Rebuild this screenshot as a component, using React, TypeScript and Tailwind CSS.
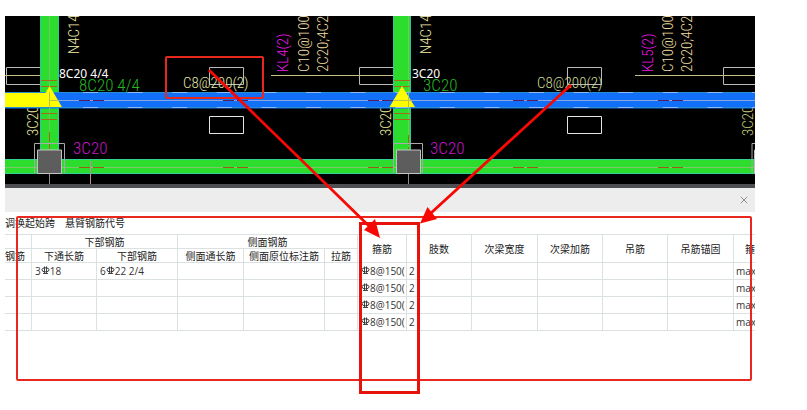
import { X } from "lucide-react";

const stirrupRows = [
  { bottomThrough: "18", bottom: "22 2/4" },
  { bottomThrough: "", bottom: "" },
  { bottomThrough: "", bottom: "" },
  { bottomThrough: "", bottom: "" },
];

const tailHeaders = ["箍筋", "肢数", "次梁宽度", "次梁加筋", "吊筋", "吊筋锚固"];
const colWidths = [27, 65, 81, 66, 81, 33, 49, 65, 66, 65, 65, 66, 21];

const cell = "overflow-hidden whitespace-nowrap border-b border-r border-[#dbe0e0] p-0 font-normal";

// HRB400 rebar grade sign
function RebarSign() {
  return (
    <svg className="-mt-1 inline-block" width="9" height="9" viewBox="0 0 9 9" fill="none" stroke="#333">
      <ellipse cx="4.500" cy="3.800" rx="3.600" ry="2" />
      <path d="M3.500 0.500v7M5.500 0.500v7M2 7.500h5" strokeWidth="0.900" />
    </svg>
  );
}

type CadTextProps = { x: number; y: number; color: string; size?: number; vertical?: boolean; children: string };

function CadText({ x, y, color, size = 15, vertical, children }: CadTextProps) {
  return (
    <text
      x={x}
      y={y}
      fill={color}
      fontSize={size}
      className="font-light [font-family:'Roboto_Condensed','Noto_Sans',sans-serif]"
      transform={vertical ? `rotate(-90 ${x} ${y})` : undefined}
    >
      {children}
    </text>
  );
}

function BeamPlan() {
  const redSegments = [79, 223, 368, 513, 658];
  return (
    <svg className="block h-[172px] w-full bg-black" viewBox="5 16 750 172" preserveAspectRatio="xMinYMin slice">
      {/* secondary beam outlines */}
      <g fill="none" stroke="#b9b9b9">
        <path d="M6.500 67.500h34v17h-34zM209.500 67.500h34v17h-34zM359.500 67.500h34v17h-34zM567.500 67.500h34v17h-34zM723.500 67.500h34v17h-34z" />
        <path d="M209.500 116.500h34v17h-34zM567.500 116.500h34v17h-34z" stroke="#e4e4e4" />
      </g>
      <path d="M5 75.500H46M271 75.500H399M635 75.500H755" stroke="#c8bd83" />

      <CadText x={38} y={136} color="#eeee9c" vertical>3C20</CadText>
      <CadText x={391} y={136} color="#eeee9c" vertical>3C20</CadText>
      <CadText x={753} y={136} color="#cccc7c" vertical>3C20</CadText>

      {/* vertical main beams */}
      <path d="M40 16h19v147H40zM393 16h18v147h-18z" fill="#2ddd2d" />
      <path d="M40.500 16V159M58.500 16V159M393.500 16V159M410.500 16V159" stroke="#28c9a0" />

      {/* bottom beam */}
      <path d="M5 159h750v15H5z" fill="#2ddd2d" />
      <path d="M5 159.500H755M5 173.500H755" stroke="#32d292" />
      <path d="M5 167.500H755" stroke="#7fc76a" />

      {/* selected beam */}
      <path d="M5 92h750v16.500H5z" fill="#1270f8" />
      <path d="M5 92.500H755M5 107.500H755" stroke="#278ed4" />
      <path d="M83 92.500H755M83 107.500H755" stroke="#8fb8ee" strokeDasharray="15 29.600" />
      <path d="M49 100.500H755" stroke="#8aa6e0" />

      {redSegments.map((x) => (
        <g key={x}>
          <path d={`M${x} 100.500h11m3 0h11`} stroke="#5a1a5c" />
          <path d={`M${x} 167.500h11m3 0h11`} stroke="#a05a1c" />
        </g>
      ))}

      {/* axes and stirrup ticks */}
      <path d="M49.500 16V150M408.500 16V150" stroke="#6fc868" />
      <path d="M49.500 132v17M408.500 135v14" stroke="#a8621c" strokeDasharray="10 2" />
      <path
        d="M41 80.500H57M41 86.500H57M41 113.500H57M41 119.500H57M394 80.500H410M394 86.500H410M394 113.500H410M394 119.500H410"
        stroke="#a8681c"
      />

      <path d="M5 93H45.500L49.500 86L62 107H5z" fill="#ffff00" />
      <path d="M402 86L415 107H389.500z" fill="#ffff00" />
      <path d="M49.500 92V107M50 100.500H58M408.500 97V107M393 100.500H411" stroke="#c2bf45" />

      {/* columns */}
      <path d="M34.500 173V143.500H64.500V173M393.500 173V143.500H422.500V173M752 173V143.500H757" fill="none" stroke="#a9a9a9" />
      <path d="M37.500 150h24v23.500h-24zM396.500 150h24v23.500h-24zM754.500 150h24v23.500h-24z" fill="#5d5d5d" stroke="#c4c4c4" />
      <path d="M49.500 174V184M408.500 174V184" stroke="#8d8d8d" />
      <path d="M90.500 161V184" stroke="#c08aa4" />

      <CadText x={79} y={91} size={17} color="#22b822">8C20 4/4</CadText>
      <CadText x={423} y={91} size={17} color="#22b822">3C20</CadText>
      <CadText x={183} y={88} color="#e4eaa8">C8@200(2)</CadText>
      <CadText x={537} y={88} color="#d0dc98">C8@200(2)</CadText>
      <CadText x={73} y={154} size={17} color="#c814c8">3C20</CadText>
      <CadText x={430} y={154} size={17} color="#c814c8">3C20</CadText>

      <CadText x={79} y={54} color="#f2eca8" vertical>N4C14</CadText>
      <CadText x={431} y={54} color="#f2eca8" vertical>N4C14</CadText>
      <CadText x={288} y={72} color="#ee18ee" vertical>KL4(2)</CadText>
      <CadText x={309} y={72} color="#f0dfa0" vertical>C10@100(2</CadText>
      <CadText x={328} y={72} color="#f0dfa0" vertical>2C20;4C2</CadText>
      <CadText x={653} y={72} color="#ee18ee" vertical>KL5(2)</CadText>
      <CadText x={673} y={72} color="#f0dfa0" vertical>C10@100(2</CadText>
      <CadText x={692} y={72} color="#f0dfa0" vertical>2C20;4C2</CadText>

      <g fill="#fff" fontSize="12" className="[font-family:'Noto_Sans',sans-serif]">
        <text x="59" y="78">8C20 4/4</text>
        <text x="412" y="78">3C20</text>
      </g>

      <path d="M5 184h750v4H5z" fill="#4e4f53" />
    </svg>
  );
}

function RebarTable() {
  return (
    <table className="w-full table-fixed border-separate border-spacing-0 border-t border-[#dbe0e0] text-center text-[10px] leading-[13px]">
      <colgroup>
        {colWidths.map((w, i) => (
          <col key={i} style={{ width: `${(w / 750) * 100}%` }} />
        ))}
      </colgroup>
      <thead>
        <tr className="h-[14px]">
          <th className={cell}></th>
          <th className={cell} colSpan={2}>下部钢筋</th>
          <th className={cell} colSpan={3}>侧面钢筋</th>
          {tailHeaders.map((name) => (
            <th key={name} className={cell} rowSpan={2}>{name}</th>
          ))}
          <th className={`${cell} border-r-0`} rowSpan={2}>
            <span className="block pl-[11px] text-left">箍筋</span>
          </th>
        </tr>
        <tr className="h-[14px]">
          <th className={`${cell} text-left`}>钢筋</th>
          <th className={cell}>下通长筋</th>
          <th className={cell}>下部钢筋</th>
          <th className={cell}>侧面通长筋</th>
          <th className={cell}>侧面原位标注筋</th>
          <th className={cell}>拉筋</th>
        </tr>
      </thead>
      <tbody className="text-left text-[10px] leading-4 text-[#333] [font-family:'Open_Sans','Noto_Sans_CJK_SC',sans-serif]">
        {stirrupRows.map((row, i) => (
          <tr key={i} className="h-[17px]">
            <td className={cell}></td>
            <td className={cell}>
              {row.bottomThrough && <span className="pl-[3px]">3<RebarSign />{row.bottomThrough}</span>}
            </td>
            <td className={cell}>
              {row.bottom && <span className="pl-[3px]">6<RebarSign />{row.bottom}</span>}
            </td>
            <td className={cell}></td>
            <td className={cell}></td>
            <td className={cell}></td>
            <td className={cell}>
              <span className="pl-[3px]"><RebarSign />8@150(</span>
            </td>
            <td className={cell}><span className="pl-[2px]">2</span></td>
            <td className={cell}></td>
            <td className={cell}></td>
            <td className={cell}></td>
            <td className={cell}></td>
            <td className={`${cell} border-r-0`}><span className="pl-[2px]">max</span></td>
          </tr>
        ))}
      </tbody>
    </table>
  );
}

// Red callouts drawn over the plan and the table
function Callouts() {
  return (
    <svg className="pointer-events-none absolute left-0 top-0" width="807" height="410" viewBox="0 0 807 410" fill="none">
      <rect x="166" y="57" width="97" height="41" rx="1" stroke="#e8281e" strokeWidth="2" />
      <rect x="17" y="217" width="734" height="163" rx="1" stroke="#e8281e" strokeWidth="2" />
      <rect x="360.500" y="223.500" width="58" height="169" stroke="#e6120c" strokeWidth="3" />
      <path d="M209 70L369 226M571 85L431 213" stroke="#f80804" strokeWidth="2.800" />
      <path d="M380 238L364 230L375 219zM420 223.500L427.500 207L437 219z" fill="#f80804" />
    </svg>
  );
}

export default function App() {
  return (
    <main className="relative min-h-[410px] overflow-hidden bg-white pl-[5px] pr-[52px] pt-4 text-[#222] [font-family:'Noto_Sans_CJK_SC',sans-serif]">
      <BeamPlan />
      <div className="flex h-6 items-center justify-end bg-[#ededee] pr-[5px]">
        <button type="button" aria-label="关闭" className="text-[#8e8e8e]">
          <X size={12} strokeWidth={2} />
        </button>
      </div>
      <div className="flex h-[22px] items-center gap-2.5 text-[10px] leading-none">
        <button type="button">调换起始跨</button>
        <button type="button">悬臂钢筋代号</button>
      </div>
      <RebarTable />
      <Callouts />
    </main>
  );
}
